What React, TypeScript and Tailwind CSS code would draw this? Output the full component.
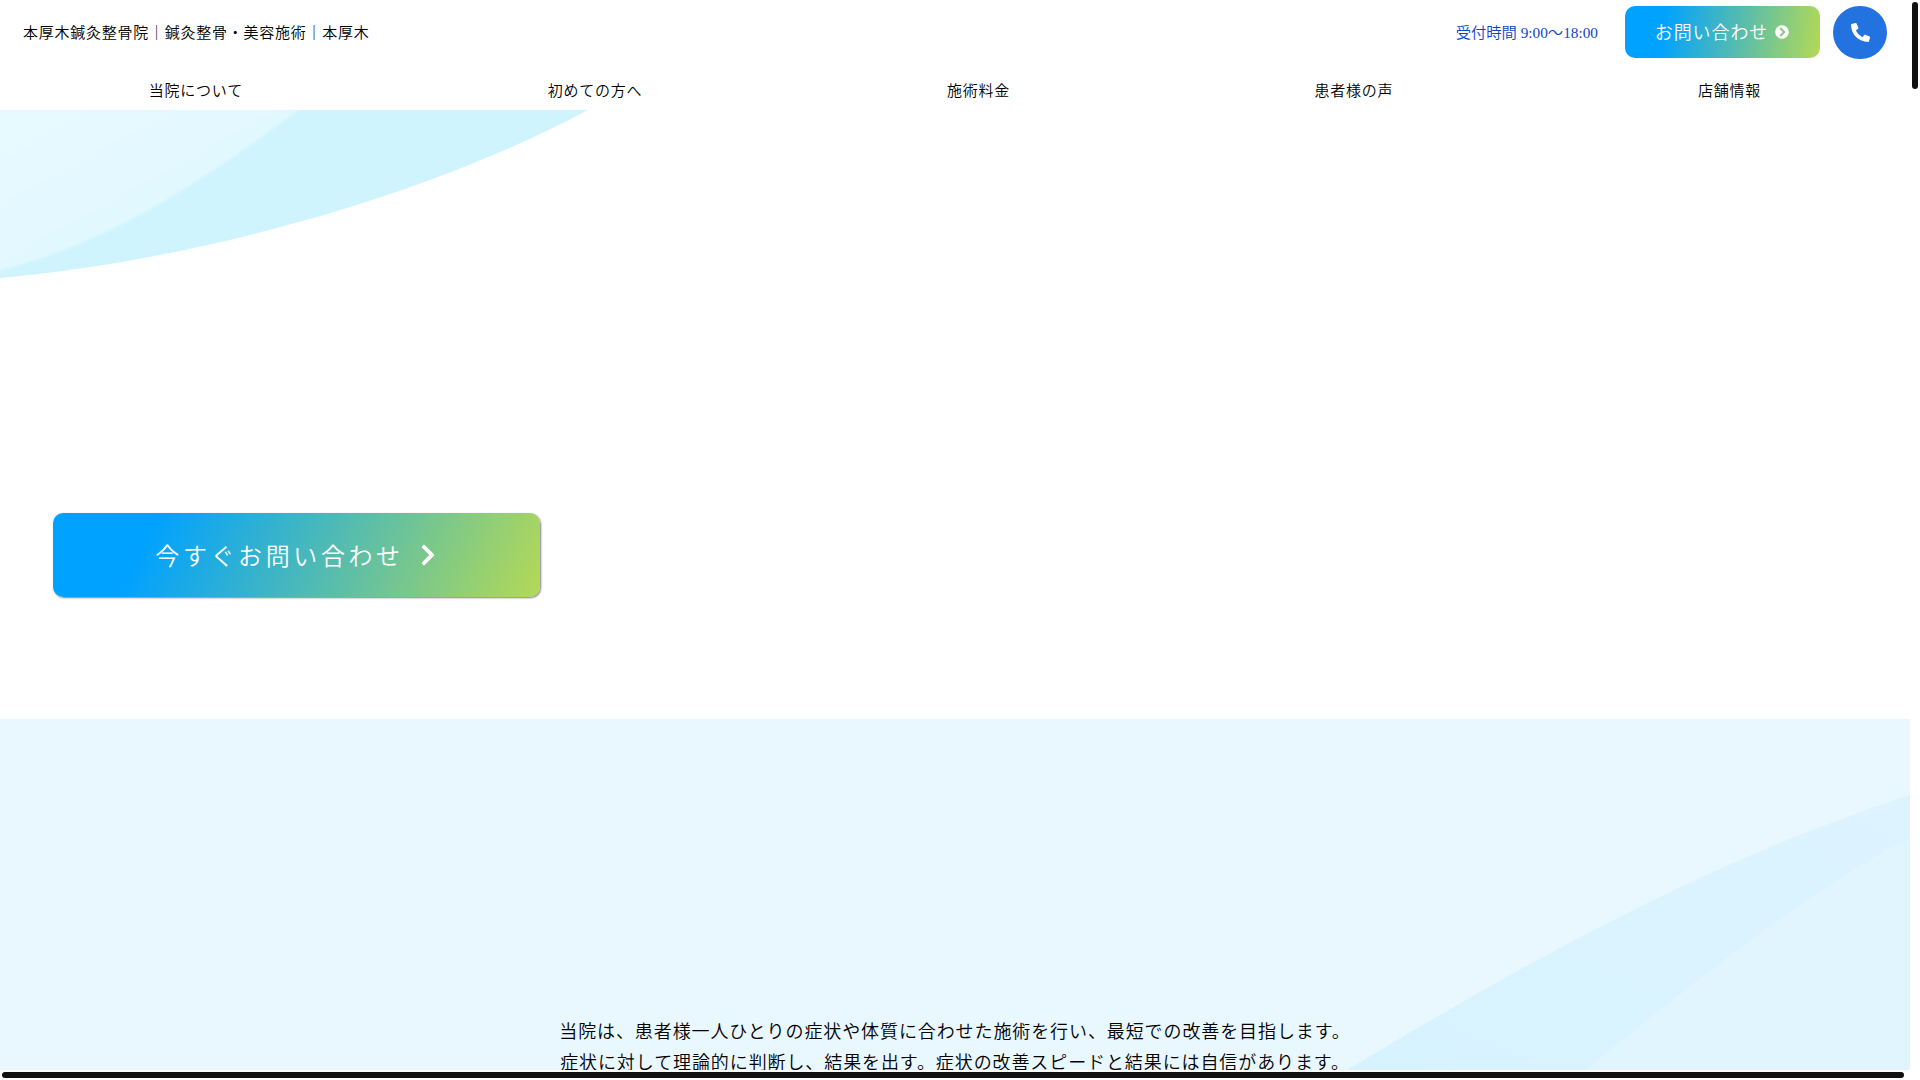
import { FaPhoneAlt, FaChevronCircleRight, FaChevronRight } from "react-icons/fa";

const jp = "font-['Liberation_Serif','Noto_Sans_CJK_JP',serif]";
const navItems = ["当院について", "初めての方へ", "施術料金", "患者様の声", "店舗情報"];

export default function App() {
  return (
    <div className={`relative h-screen w-full overflow-hidden bg-white font-[350] text-black ${jp}`}>
      <div className="w-[1910px]">
        <header className="h-[110px] bg-white">
          <div className="flex h-[70px] items-center pl-[23px] pr-[23px]">
            <h1 className="mt-[-3px] text-[15px] font-[350] tracking-[0.75px]">本厚木鍼灸整骨院｜鍼灸整骨・美容施術｜本厚木</h1>
            <div className="ml-auto flex items-center">
              <span className="mr-[27px] mt-[-3px] text-[15.3px] text-[#0f46c8]">受付時間 9:00〜18:00</span>
              <a className="mt-[-6px] flex h-[52px] w-[195px] items-center justify-center gap-[7px] rounded-[10px] bg-[linear-gradient(100deg,#00a2ff_20%,#b4d955_100%)] pr-[1px] pt-[2px] text-[18px] tracking-[0.9px] text-white">
                お問い合わせ
                <FaChevronCircleRight className="mt-[-2px] text-[14px]" />
              </a>
              <a className="mt-[-5px] ml-[13px] flex h-[53px] w-[54px] items-center justify-center rounded-full bg-[#2272e0] text-white">
                <FaPhoneAlt className="text-[19px]" />
              </a>
            </div>
          </div>
          <nav className="ml-[-3.5px] flex w-[1917px] pt-[1px] text-[15px] tracking-[0.75px]">
            {navItems.map((n) => (
              <a key={n} className="grow text-center leading-[40px]">{n}</a>
            ))}
          </nav>
        </header>

        <section className="relative h-[609px] bg-white pl-[53px] pt-[403px]">
          <svg className="absolute left-0 top-0" width="600" height="180" viewBox="0 0 600 180">
            <defs>
              <linearGradient id="hl" x1="0" y1="0" x2="1" y2="1">
                <stop offset="0" stopColor="#e8faff" />
                <stop offset="1" stopColor="#dcf6ff" />
              </linearGradient>
            </defs>
            <path d="M0 0H588C430 85 200 150 0 168Z" fill="#d0f4fe" />
            <path className="blur-[1.5px]" d="M-10 -10H307L298 0C210 65 120 130 0 160L-10 163Z" fill="url(#hl)" />
          </svg>
          <a className="relative flex h-[84px] w-[487px] items-center justify-center gap-[12px] rounded-[10px] bg-[linear-gradient(115deg,#00a2ff_20%,#b4d955_100%)] pl-[2px] pt-[4px] text-[24px] tracking-[3.6px] text-white shadow-[1px_1px_2px_rgba(0,0,0,0.5)]">
            今すぐお問い合わせ
            <FaChevronRight className="mt-[-4px] text-[24px]" />
          </a>
        </section>

        <section className="relative h-[351px] overflow-hidden bg-[#e9f7ff] pt-[298px] text-center text-[18px] leading-[31px] tracking-[0.9px]">
          <svg className="absolute bottom-0 right-0" width="580" height="280" viewBox="0 0 580 280">
            <defs>
              <linearGradient id="bw" x1="0" y1="1" x2="1" y2="0">
                <stop offset="0" stopColor="#d7f2ff" />
                <stop offset="1" stopColor="#ddf4ff" />
              </linearGradient>
            </defs>
            <path d="M580 5C380 70 200 170 17 280H580Z" fill="url(#bw)" />
            <path className="blur-[1.5px]" d="M590 44C500 85 365 190 255 280L250 290H590Z" fill="#e1f5ff" />
          </svg>
          <p className="relative">当院は、患者様一人ひとりの症状や体質に合わせた施術を行い、最短での改善を目指します。</p>
          <p className="relative">症状に対して理論的に判断し、結果を出す。症状の改善スピードと結果には自信があります。</p>
        </section>
      </div>

      <div className="absolute right-[2px] top-[2px] h-[87px] w-[6px] rounded-full bg-[#111]" />
      <div className="absolute bottom-[2px] left-[2px] h-[6px] w-[1902px] rounded-full bg-[#111]" />
    </div>
  );
}
